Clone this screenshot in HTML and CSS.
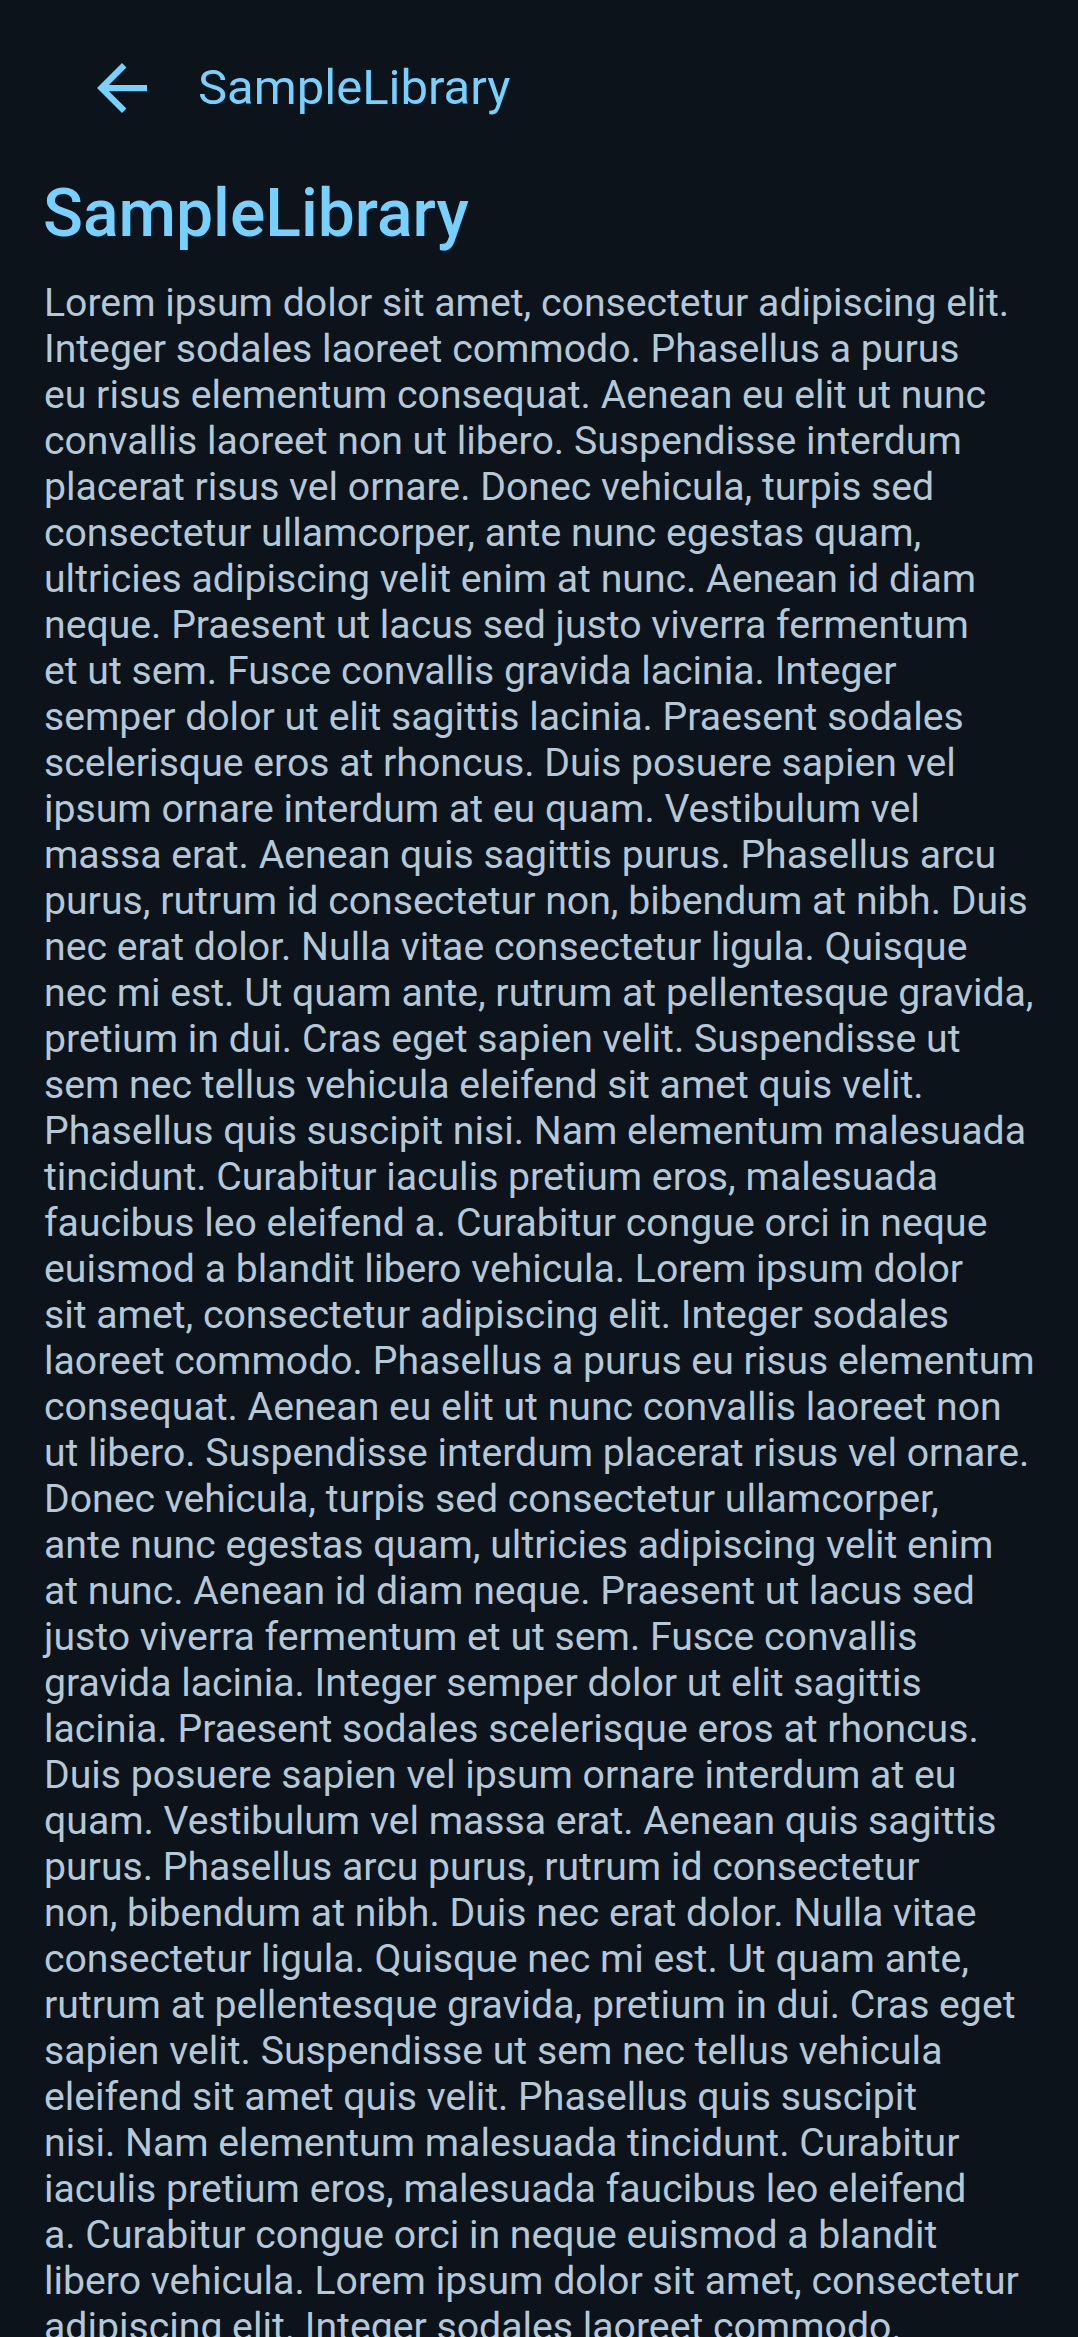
FILE: index.html
```html
<!DOCTYPE html>
<html lang="en">
<head>
<meta charset="utf-8">
<title>SampleLibrary</title>
<link rel="stylesheet" href="styles.css">
</head>
<body>
<div class="screen">
  <header class="toolbar">
    <button class="nav-btn" aria-label="Back">
      <svg class="nav-icon" viewBox="4 4 16 16" width="50" height="50" aria-hidden="true">
        <path d="M20 11H7.83l5.59-5.59L12 4l-8 8 8 8 1.41-1.41L7.83 13H20v-2z"/>
      </svg>
    </button>
    <span class="toolbar-title">SampleLibrary</span>
  </header>
  <main class="content">
    <h1 class="page-title">SampleLibrary</h1>
    <p class="body-text">Lorem ipsum dolor sit amet, consectetur adipiscing elit.<br>
Integer sodales laoreet commodo. Phasellus a purus<br>
eu risus elementum consequat. Aenean eu elit ut nunc<br>
convallis laoreet non ut libero. Suspendisse interdum<br>
placerat risus vel ornare. Donec vehicula, turpis sed<br>
consectetur ullamcorper, ante nunc egestas quam,<br>
ultricies adipiscing velit enim at nunc. Aenean id diam<br>
neque. Praesent ut lacus sed justo viverra fermentum<br>
et ut sem. Fusce convallis gravida lacinia. Integer<br>
semper dolor ut elit sagittis lacinia. Praesent sodales<br>
scelerisque eros at rhoncus. Duis posuere sapien vel<br>
ipsum ornare interdum at eu quam. Vestibulum vel<br>
massa erat. Aenean quis sagittis purus. Phasellus arcu<br>
purus, rutrum id consectetur non, bibendum at nibh. Duis<br>
nec erat dolor. Nulla vitae consectetur ligula. Quisque<br>
nec mi est. Ut quam ante, rutrum at pellentesque gravida,<br>
pretium in dui. Cras eget sapien velit. Suspendisse ut<br>
sem nec tellus vehicula eleifend sit amet quis velit.<br>
Phasellus quis suscipit nisi. Nam elementum malesuada<br>
tincidunt. Curabitur iaculis pretium eros, malesuada<br>
faucibus leo eleifend a. Curabitur congue orci in neque<br>
euismod a blandit libero vehicula. Lorem ipsum dolor<br>
sit amet, consectetur adipiscing elit. Integer sodales<br>
laoreet commodo. Phasellus a purus eu risus elementum<br>
consequat. Aenean eu elit ut nunc convallis laoreet non<br>
ut libero. Suspendisse interdum placerat risus vel ornare.<br>
Donec vehicula, turpis sed consectetur ullamcorper,<br>
ante nunc egestas quam, ultricies adipiscing velit enim<br>
at nunc. Aenean id diam neque. Praesent ut lacus sed<br>
justo viverra fermentum et ut sem. Fusce convallis<br>
gravida lacinia. Integer semper dolor ut elit sagittis<br>
lacinia. Praesent sodales scelerisque eros at rhoncus.<br>
Duis posuere sapien vel ipsum ornare interdum at eu<br>
quam. Vestibulum vel massa erat. Aenean quis sagittis<br>
purus. Phasellus arcu purus, rutrum id consectetur<br>
non, bibendum at nibh. Duis nec erat dolor. Nulla vitae<br>
consectetur ligula. Quisque nec mi est. Ut quam ante,<br>
rutrum at pellentesque gravida, pretium in dui. Cras eget<br>
sapien velit. Suspendisse ut sem nec tellus vehicula<br>
eleifend sit amet quis velit. Phasellus quis suscipit<br>
nisi. Nam elementum malesuada tincidunt. Curabitur<br>
iaculis pretium eros, malesuada faucibus leo eleifend<br>
a. Curabitur congue orci in neque euismod a blandit<br>
libero vehicula. Lorem ipsum dolor sit amet, consectetur<br>
adipiscing elit. Integer sodales laoreet commodo.<br>
Phasellus a purus eu risus elementum consequat.</p>
  </main>
</div>
</body>
</html>
```
FILE: styles.css
```css
html, body {
  margin: 0;
  padding: 0;
  background: #0d131a;
}

.screen {
  width: 1078px;
  height: 2337px;
  overflow: hidden;
  background: #0d131a;
  font-family: Roboto, "Noto Sans", sans-serif;
}

.toolbar {
  display: flex;
  align-items: center;
  height: 176px;
  padding-left: 97px;
  box-sizing: border-box;
}

.nav-btn {
  display: flex;
  align-items: center;
  justify-content: center;
  width: 50px;
  height: 50px;
  padding: 0;
  margin: 0;
  border: 0;
  background: transparent;
}

.nav-icon {
  display: block;
  fill: #77d1ff;
}

.toolbar-title {
  margin-left: 51px;
  font-size: 49px;
  line-height: 56px;
  font-weight: 400;
  color: #77d1ff;
}

.content {
  padding: 0 40px 0 44px;
}

.page-title {
  margin: 0 0 0 -1px;
  font-size: 66px;
  line-height: 76px;
  font-weight: 500;
  color: #77d1ff;
}

.body-text {
  margin: 28px 0 0;
  font-size: 39.2px;
  line-height: 46px;
  font-weight: 400;
  color: #b4c8d8;
  white-space: nowrap;
}
```
